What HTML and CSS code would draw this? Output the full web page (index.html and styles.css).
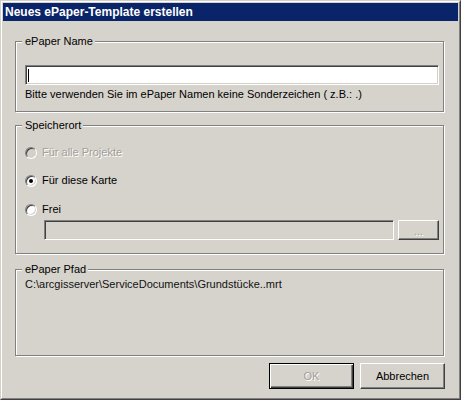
FILE: index.html
```html
<!DOCTYPE html>
<html lang="de">
<head>
<meta charset="utf-8">
<title>Neues ePaper-Template erstellen</title>
<link rel="stylesheet" href="styles.css">
</head>
<body>
<div class="window">
  <div class="frame">
    <div class="titlebar">Neues ePaper-Template erstellen</div>
    <div class="content">
      <div class="group g-name">
        <span class="legend">ePaper Name</span>
        <div class="field field-white"><span class="caret"></span></div>
        <div class="hint">Bitte verwenden Sie im ePaper Namen keine Sonderzeichen ( z.B.: .)</div>
      </div>
      <div class="group g-ort">
        <span class="legend">Speicherort</span>
        <div class="radio-row row1 disabled"><span class="radio"></span><span class="rlabel">Für alle Projekte</span></div>
        <div class="radio-row row2"><span class="radio checked"></span><span class="rlabel">Für diese Karte</span></div>
        <div class="radio-row row3"><span class="radio"></span><span class="rlabel">Frei</span></div>
        <div class="frei-row">
          <div class="field field-gray"></div>
          <div class="btn btn-dots"><span class="dis">...</span></div>
        </div>
      </div>
      <div class="group g-pfad">
        <span class="legend">ePaper Pfad</span>
        <div class="path">C:\arcgisserver\ServiceDocuments\Grundstücke..mrt</div>
      </div>
      <div class="buttons">
        <div class="btn btn-main btn-default"><span class="dis">OK</span></div>
        <div class="btn btn-main">Abbrechen</div>
      </div>
    </div>
  </div>
</div>
</body>
</html>
```
FILE: styles.css
```css
html, body {
  margin: 0;
  padding: 0;
  background: #d6d3cc;
}
body {
  font-family: "Liberation Sans", Arial, sans-serif;
  font-size: 11px;
  line-height: 13px;
  color: #000;
}
.window {
  width: 461px;
  height: 400px;
  box-sizing: border-box;
  border: 1px solid;
  border-color: #d4d0c8 #404040 #404040 #d4d0c8;
  background: #d6d3cc;
}
.frame {
  height: 100%;
  box-sizing: border-box;
  border: 1px solid;
  border-color: #fff #808080 #808080 #fff;
  padding: 1px;
}
.titlebar {
  height: 18px;
  line-height: 18px;
  background: #0a246a;
  color: #fff;
  font-weight: bold;
  font-size: 12px;
  padding-left: 2px;
  white-space: nowrap;
}
.content {
  display: flex;
  flex-direction: column;
  padding: 20px 13px 0 12px;
}
.group {
  width: 429px;
  box-sizing: border-box;
  border: 1px solid #808080;
  box-shadow: 1px 1px 0 #fff, inset 1px 1px 0 #fff;
  padding-left: 9px;
  display: flex;
  flex-direction: column;
  align-items: flex-start;
}
.legend {
  display: block;
  margin: -7px 0 0 -3px;
  padding: 0 2px 0 3px;
  background: #d6d3cc;
  height: 13px;
  white-space: nowrap;
}
.g-name { height: 71px; }
.g-ort { height: 129px; margin-top: 13px; }
.g-pfad { height: 87px; margin-top: 15px; }

.field {
  box-sizing: border-box;
  height: 20px;
  border: 1px solid;
  border-color: #808080 #fff #fff #808080;
  box-shadow: inset 1px 1px 0 #404040, inset -1px -1px 0 #d4d0c8;
  display: flex;
  align-items: center;
  padding-left: 2px;
}
.field-white {
  width: 414px;
  margin-top: 17px;
  background: #fff;
}
.caret {
  width: 1px;
  height: 13px;
  background: #000;
}
.hint {
  margin-top: 3px;
  white-space: nowrap;
}
.radio-row {
  display: flex;
  align-items: center;
  height: 12px;
  white-space: nowrap;
}
.row1 { margin-top: 15px; }
.row2 { margin-top: 16px; }
.row3 { margin-top: 17px; }
.radio {
  position: relative;
  width: 12px;
  height: 12px;
  box-sizing: border-box;
  border-radius: 50%;
  border: 1px solid;
  border-color: #808080 #fff #fff #808080;
  box-shadow: inset 1px 1px 0 #404040, inset -1px -1px 0 #d4d0c8;
  background: #fff;
  flex: none;
}
.disabled .radio { background: #d4d0c8; }
.radio.checked::after {
  content: "";
  position: absolute;
  left: 3px;
  top: 3px;
  width: 4px;
  height: 4px;
  border-radius: 50%;
  background: #000;
}
.rlabel {
  margin-left: 5px;
  position: relative;
  top: -1px;
}
.disabled .rlabel,
.dis {
  color: #a19f99;
  text-shadow: 1px 1px 0 #fff;
}
.frei-row {
  display: flex;
  margin: 4px 0 0 19px;
  gap: 4px;
}
.field-gray {
  width: 350px;
  background: #d6d3cc;
}
.btn {
  box-sizing: border-box;
  display: flex;
  align-items: center;
  justify-content: center;
  border: 1px solid;
  border-color: #fff #404040 #404040 #fff;
  box-shadow: inset -1px -1px 0 #808080;
  background: #d6d3cc;
}
.btn-dots {
  width: 41px;
  height: 20px;
  padding-top: 3px;
}
.path {
  margin-top: 2px;
  white-space: nowrap;
  color: #111;
}
.buttons {
  display: flex;
  justify-content: flex-end;
  gap: 6px;
  margin-top: 7px;
}
.btn-main {
  width: 85px;
  height: 26px;
}
.btn-default {
  border: 1px solid #000;
  box-shadow: inset 1px 1px 0 #fff, inset -1px -1px 0 #404040, inset -2px -2px 0 #808080;
}
```
